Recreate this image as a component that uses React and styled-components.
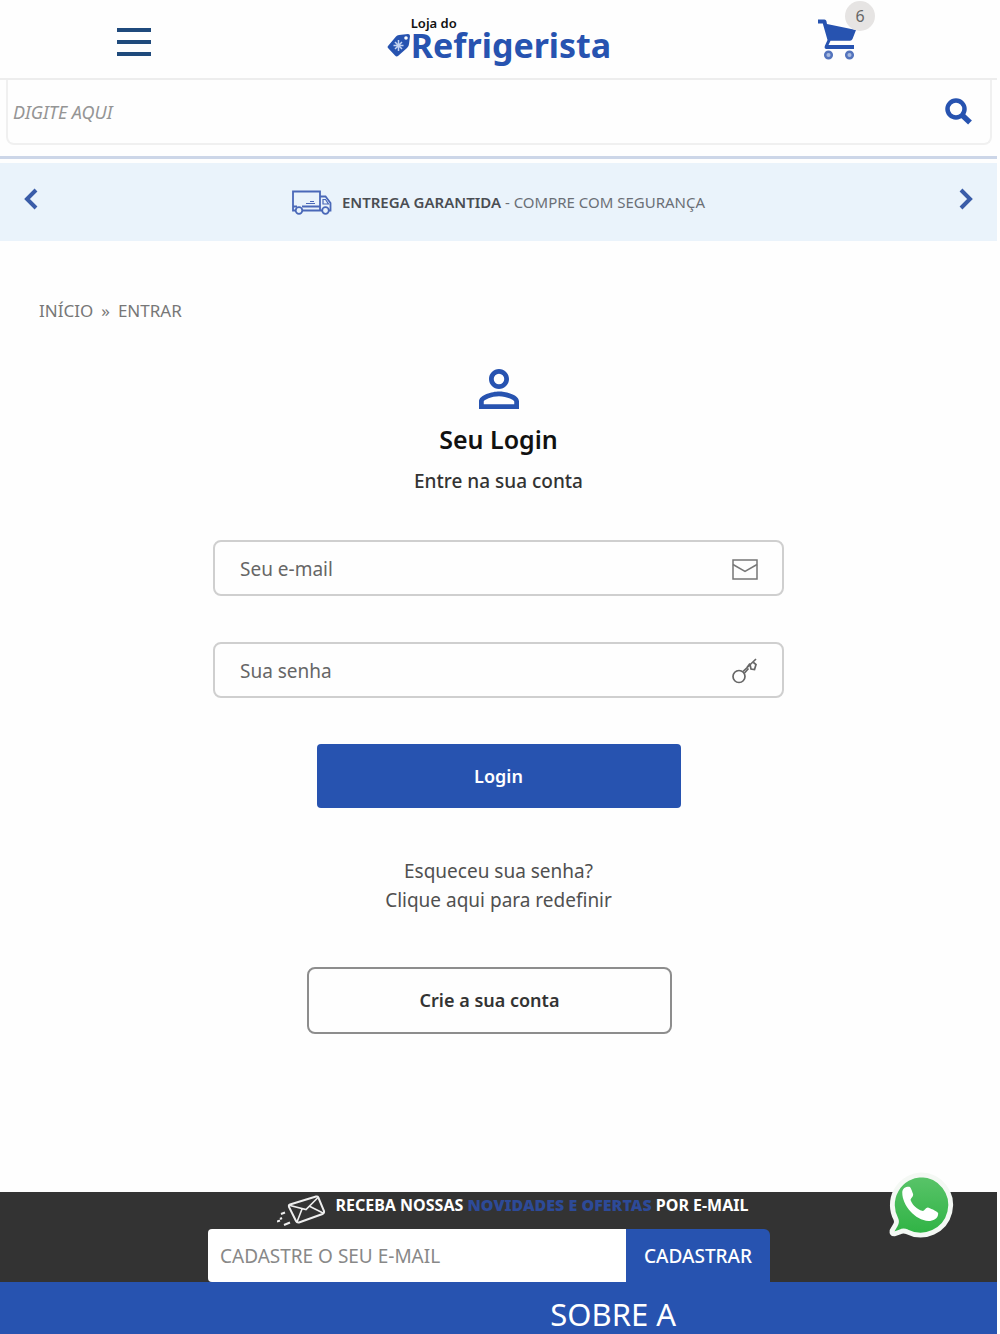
import React, { useState } from "react";
import styled, { createGlobalStyle } from "styled-components";

const blue = "#2753b0";

const GlobalStyle = createGlobalStyle`
  * {
    box-sizing: border-box;
  }
  body {
    margin: 0;
    padding-right: 3px;
    background: #fefefe;
    color: #333;
    font-family: "Noto Sans", "Open Sans", sans-serif;
  }
  button,
  input {
    font-family: inherit;
  }
  a {
    color: inherit;
    text-decoration: none;
  }
  svg {
    display: block;
    flex: none;
  }
`;

const Container = styled.div``;

const Header = styled.header`
  display: grid;
  grid-template-columns: 1fr auto 1fr;
  align-items: center;
  height: 80px;
  padding: 0 122px 0 117px;
  border-bottom: 2px solid #ededed;
`;

const IconButton = styled.button`
  display: flex;
  padding: 0;
  border: none;
  background: none;
  color: ${blue};
  cursor: pointer;
`;

const MenuButton = styled(IconButton)`
  flex-direction: column;
  justify-content: space-between;
  width: 34px;
  height: 28px;
  margin-top: 6px;
`;

const MenuBar = styled.span`
  width: 34px;
  height: 4px;
  background: #1f4a7c;
`;

const Logo = styled.a`
  display: flex;
  flex-direction: column;
  padding-left: 6px;
  color: ${blue};
`;

const LogoTop = styled.span`
  padding-left: 24px;
  font-size: 13px;
  font-weight: 600;
  line-height: 12px;
  color: #111;
`;

const LogoRow = styled.span`
  display: flex;
  align-items: center;
`;

const LogoName = styled.span`
  font-size: 34px;
  font-weight: 700;
  line-height: 32px;
`;

const CartButton = styled(IconButton)`
  position: relative;
  justify-self: end;
  width: 57px;
  height: 41px;
`;

const CartBadge = styled.span`
  position: absolute;
  top: -18px;
  right: 0;
  width: 30px;
  height: 30px;
  border-radius: 50%;
  background: #e6e4e3;
  color: #666;
  font-size: 16px;
  line-height: 30px;
`;

const SearchArea = styled.div`
  padding: 0 5px 11px 6px;
  border-bottom: 3px solid #ccd6e8;
`;

const SearchForm = styled.form`
  display: flex;
  align-items: center;
  height: 65px;
  padding: 0 18px 0 5px;
  border: 2px solid #f0f0f0;
  border-top: none;
  border-radius: 0 0 8px 8px;
`;

const SearchInput = styled.input`
  flex: 1;
  min-width: 0;
  padding: 0;
  border: none;
  outline: none;
  background: none;
  font-size: 18px;
  font-style: italic;
  &::placeholder {
    color: #959595;
  }
`;

const Banner = styled.section`
  display: flex;
  align-items: center;
  justify-content: space-between;
  height: 78px;
  margin-top: 4px;
  padding: 0 24px;
  background: #eaf3fb;
`;

const ArrowButton = styled(IconButton)`
  padding-bottom: 6px;
`;

const BannerText = styled.p`
  display: flex;
  align-items: center;
  gap: 10px;
  margin: 0;
  color: #6a6f76;
  font-size: 15px;
  b {
    font-weight: 600;
    color: #4a4d52;
  }
`;

const Breadcrumb = styled.nav`
  display: flex;
  gap: 8px;
  padding: 56px 39px 0;
  color: #777;
  font-size: 17px;
  line-height: 28px;
`;

const Login = styled.main`
  display: flex;
  flex-direction: column;
  align-items: center;
  padding: 44px 16px 158px;
`;

const Title = styled.h1`
  margin: 14px 0 0;
  color: #111;
  font-size: 25px;
  font-weight: 600;
  line-height: 32px;
`;

const Subtitle = styled.p`
  margin: 12px 0 0;
  font-size: 19px;
  font-weight: 500;
  line-height: 28px;
`;

const LoginForm = styled.form`
  display: flex;
  flex-direction: column;
  align-items: center;
  gap: 46px;
  width: 100%;
  max-width: 571px;
  margin-top: 45px;
`;

const Field = styled.label`
  display: flex;
  align-items: center;
  width: 100%;
  height: 56px;
  padding: 2px 24px 0 25px;
  border: 2px solid #cfcfcf;
  border-radius: 8px;
  color: #666;
`;

const FieldInput = styled.input`
  flex: 1;
  min-width: 0;
  padding: 0;
  border: none;
  outline: none;
  background: none;
  color: #444;
  font-size: 19px;
  &::placeholder {
    color: #666;
  }
`;

const LoginButton = styled.button`
  width: 364px;
  max-width: 100%;
  height: 64px;
  border: none;
  border-radius: 4px;
  background: ${blue};
  color: #fff;
  font-size: 18px;
  font-weight: 600;
  cursor: pointer;
`;

const Forgot = styled.a`
  margin-top: 49px;
  color: #505050;
  font-size: 19px;
  line-height: 29px;
  text-align: center;
`;

const CreateAccount = styled.a`
  width: 365px;
  max-width: 100%;
  margin: 52px 18px 0 0;
  border: 2px solid #8d8d8d;
  border-radius: 8px;
  font-size: 18px;
  font-weight: 600;
  line-height: 63px;
  text-align: center;
`;

const Newsletter = styled.section`
  display: flex;
  flex-direction: column;
  align-items: center;
  background: #333;
`;

const NewsletterTitle = styled.h2`
  display: flex;
  gap: 10px;
  margin: 0 0 0 28px;
  padding: 3px 0 2px;
  color: #fff;
  font-size: 16px;
  font-weight: 700;
  line-height: 20px;
  b {
    color: #2d4a98;
  }
`;

const NewsletterForm = styled.form`
  display: flex;
  width: 562px;
  max-width: 100%;
  height: 53px;
  margin-right: 19px;
`;

const NewsletterInput = styled.input`
  flex: 1;
  min-width: 0;
  padding: 0 12px;
  border: none;
  border-radius: 4px 0 0 4px;
  outline: none;
  background: #fff;
  font-size: 19px;
  &::placeholder {
    color: #888;
  }
`;

const NewsletterButton = styled.button`
  width: 144px;
  padding: 0;
  border: none;
  border-radius: 0 6px 0 0;
  background: ${blue};
  color: #fff;
  font-size: 19px;
  font-weight: 500;
  cursor: pointer;
`;

const Footer = styled.footer`
  padding: 12px 0 0 23%;
  background: ${blue};
  color: #fff;
  text-align: center;
`;

const FooterTitle = styled.h2`
  margin: 0;
  font-size: 31px;
  font-weight: 400;
  line-height: 40px;
`;

const WhatsApp = styled.a`
  position: fixed;
  right: 43px;
  bottom: 92px;
`;

const TagIcon = () => (
  <svg width="24" height="24" viewBox="0 0 24 24">
    <path
      d="M1 13 9 3.500Q10 2 12 2L21 1Q23 1 23 3L22 11Q22 13 20 15L11 23Q9.500 24 8 22.500L1 15Q0 14 1 13Z"
      fill={blue}
    />
    <circle cx="19" cy="5" r="1.800" fill="#fff" />
    <path d="M11.500 7v11M6.500 12.500h10M8 9l7 7M15 9l-7 7" stroke="#c4d3f1" strokeWidth="1.500" />
  </svg>
);

const CartIcon = () => (
  <svg width="40" height="41" viewBox="0 0 40 41">
    <path d="M0 .5h6.500Q8 .5 8.400 2L9 5l29 6-3.500 9q-.8 1.800-2.500 1.800H12.500L10.500 26H36v4H8.500Q6 30 6.800 27L9.500 21 4.800 4.500H0Z" fill={blue} />
    <circle cx="10.500" cy="36" r="3.300" fill="#a9bbe0" stroke="#5474bd" strokeWidth="2.500" />
    <circle cx="31.500" cy="36" r="3.300" fill="#a9bbe0" stroke="#5474bd" strokeWidth="2.500" />
  </svg>
);

const SearchIcon = () => (
  <svg width="27" height="27" viewBox="0 0 27 27" fill="none" stroke={blue}>
    <circle cx="11" cy="11" r="8.500" strokeWidth="4.500" />
    <path d="m17 17 8 7.500" strokeWidth="5.500" />
  </svg>
);

const Chevron = ({ right }) => (
  <svg width="14" height="22" viewBox="0 0 14 22" fill="none" stroke="#3a5ca8" strokeWidth="4">
    <path d={right ? "m2 2 9 9-9 9" : "m12 2-9 9 9 9"} />
  </svg>
);

const TruckIcon = () => (
  <svg width="40" height="25" viewBox="0 0 40 25" fill="none" stroke="#4a68b8" strokeWidth="1.800">
    <path d="M3.500 20.500H1V1.500h27v19H10.500M28 6.500h5.500L38.500 13v7.500h-1.500M28 20.500h2M1 16.500h4M10 16.500h18" />
    <path d="M31 9.500h2.500l3 4.500H31ZM14 13.500h9M18 11.500h4" strokeWidth="1.200" />
    <circle cx="7" cy="20.500" r="3.300" />
    <circle cx="33.500" cy="20.500" r="3.300" />
  </svg>
);

const UserIcon = () => (
  <svg width="40" height="40" viewBox="4 4 16 16" fill={blue}>
    <path d="M12 5.900a2.100 2.100 0 1 1 0 4.200 2.100 2.100 0 0 1 0-4.200m0 9c2.970 0 6.100 1.460 6.100 2.100v1.100H5.900V17c0-.64 3.130-2.100 6.100-2.100M12 4C9.790 4 8 5.790 8 8s1.790 4 4 4 4-1.790 4-4-1.790-4-4-4m0 9c-2.670 0-8 1.340-8 4v3h16v-3c0-2.660-5.330-4-8-4" />
  </svg>
);

const MailIcon = () => (
  <svg width="26" height="22" viewBox="0 0 26 22" fill="none" stroke="#777" strokeWidth="1.500">
    <path d="M1 2h24v19H1Z" />
    <path d="m1 6.500 12 7 12-7" />
  </svg>
);

const KeyIcon = () => (
  <svg width="26" height="26" viewBox="0 0 26 26" fill="none" stroke="#666" strokeWidth="1.700">
    <circle cx="7" cy="18.500" r="6" />
    <path d="M11 13.500 24 1M12.500 15l4-4.500M15 9.500l3-4M18 6.500l1 4.500 3.500.5 1.500-5-2.500-2" />
  </svg>
);

const FlyingMailIcon = () => (
  <svg width="49" height="32" viewBox="0 0 49 32" fill="none" stroke="#eee" strokeWidth="2">
    <path d="M13 9.500 39 1.500q2-.5 2.500 1.500L47 16q.5 2-1.500 3L22 27.500q-2 .5-3-1.500L12 12q-.5-2 1-2.500Z" />
    <path d="M13 10.500 29 14.500 41 2.500M20 27l5-13M46 18l-13-6.500" strokeWidth="1.600" />
    <path d="m4 19 4-1.500M0 26.500l3-1M7 30l6-2.500M3 24l2-1" />
  </svg>
);

const WhatsAppIcon = () => (
  <svg width="73" height="73" viewBox="0 0 68 68">
    <defs>
      <linearGradient id="whats" x1="0" y1="0" x2="0" y2="1">
        <stop offset="0" stopColor="#5ac46a" />
        <stop offset="1" stopColor="#2fb344" />
      </linearGradient>
    </defs>
    <path
      d="M34.500 5.500a28 28 0 1 1-13 53q-3.500-1.500-6 0l-6 2q-2.500 0-2-3l3-5q2-3 .5-6A28 28 0 0 1 34.500 5.500Z"
      fill="url(#whats)"
      stroke="#f4f8f4"
      strokeWidth="4.500"
      strokeLinejoin="round"
    />
    <path
      d="M17 22c0-4 3-5.500 6-5.500 2 0 2.500 2.500 4 6.500 1 3-3 4-2 6.500 2 4.500 6 8 10.500 9.500 2.500.5 3.500-4 6-3 3 1.200 9 3.500 9 5.500 0 5-5 7-9 7C29 48 17 34 17 22Z"
      fill="#fff"
    />
  </svg>
);

const App = () => {
  const [search, setSearch] = useState("");
  const [user, setUser] = useState({ email: "", password: "" });
  const [newsEmail, setNewsEmail] = useState("");

  const handleUser = (e) => {
    setUser({ ...user, [e.target.name]: e.target.value });
  };

  const handleSubmit = (e) => {
    e.preventDefault();
  };

  return (
    <Container>
      <GlobalStyle />
      <Header>
        <MenuButton aria-label="Menu">
          <MenuBar />
          <MenuBar />
          <MenuBar />
        </MenuButton>
        <Logo href="#">
          <LogoTop>Loja do</LogoTop>
          <LogoRow>
            <TagIcon />
            <LogoName>Refrigerista</LogoName>
          </LogoRow>
        </Logo>
        <CartButton aria-label="Carrinho">
          <CartIcon />
          <CartBadge>6</CartBadge>
        </CartButton>
      </Header>
      <SearchArea>
        <SearchForm onSubmit={handleSubmit}>
          <SearchInput
            aria-label="Buscar"
            placeholder="DIGITE AQUI"
            value={search}
            onChange={(e) => setSearch(e.target.value)}
          />
          <IconButton aria-label="Buscar">
            <SearchIcon />
          </IconButton>
        </SearchForm>
      </SearchArea>
      <Banner>
        <ArrowButton aria-label="Anterior">
          <Chevron />
        </ArrowButton>
        <BannerText>
          <TruckIcon />
          <span>
            <b>ENTREGA GARANTIDA</b> - COMPRE COM SEGURANÇA
          </span>
        </BannerText>
        <ArrowButton aria-label="Próximo">
          <Chevron right />
        </ArrowButton>
      </Banner>
      <Breadcrumb>
        <a href="#">INÍCIO</a>
        <span>»</span>
        <a href="#">ENTRAR</a>
      </Breadcrumb>
      <Login>
        <UserIcon />
        <Title>Seu Login</Title>
        <Subtitle>Entre na sua conta</Subtitle>
        <LoginForm onSubmit={handleSubmit}>
          <Field>
            <FieldInput
              type="email"
              name="email"
              aria-label="Seu e-mail"
              placeholder="Seu e-mail"
              value={user.email}
              onChange={handleUser}
            />
            <MailIcon />
          </Field>
          <Field>
            <FieldInput
              type="password"
              name="password"
              aria-label="Sua senha"
              placeholder="Sua senha"
              value={user.password}
              onChange={handleUser}
            />
            <KeyIcon />
          </Field>
          <LoginButton>Login</LoginButton>
        </LoginForm>
        <Forgot href="#">
          Esqueceu sua senha?
          <br />
          Clique aqui para redefinir
        </Forgot>
        <CreateAccount href="#">Crie a sua conta</CreateAccount>
      </Login>
      <Newsletter>
        <NewsletterTitle>
          <FlyingMailIcon />
          <span>
            RECEBA NOSSAS <b>NOVIDADES E OFERTAS</b> POR E-MAIL
          </span>
        </NewsletterTitle>
        <NewsletterForm onSubmit={handleSubmit}>
          <NewsletterInput
            type="email"
            aria-label="Cadastre o seu e-mail"
            placeholder="CADASTRE O SEU E-MAIL"
            value={newsEmail}
            onChange={(e) => setNewsEmail(e.target.value)}
          />
          <NewsletterButton>CADASTRAR</NewsletterButton>
        </NewsletterForm>
      </Newsletter>
      <Footer>
        <FooterTitle>SOBRE A</FooterTitle>
      </Footer>
      <WhatsApp href="#" aria-label="WhatsApp">
        <WhatsAppIcon />
      </WhatsApp>
    </Container>
  );
};

export default App;
